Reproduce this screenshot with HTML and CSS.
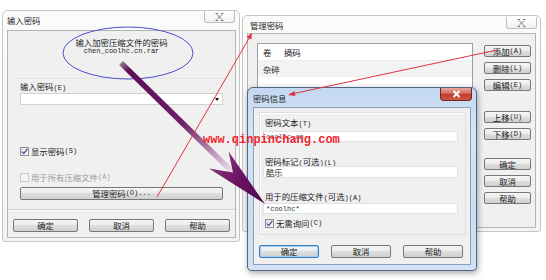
FILE: index.html
```html
<!DOCTYPE html>
<html lang="zh-CN">
<head>
<meta charset="utf-8">
<title>密码</title>
<link rel="stylesheet" href="styles.css">
</head>
<body>
<div class="desk">

  <section class="win basic w1">
    <header class="tbar">
      <span class="ttl">输入密码</span>
      <span class="xbtn"><svg width="9" height="8" viewBox="0 0 9 8"><path d="M2 1.5 L7 6.5 M7 1.5 L2 6.5 M0.5 0.5h2.5 M6 0.5h2.5 M0.5 7.5h2.5 M6 7.5h2.5" stroke="#7a7a7a" stroke-width="1" fill="none"/></svg></span>
    </header>
    <div class="client c1">
      <div class="page">
        <div class="prompt">
          <div>输入加密压缩文件的密码</div>
          <div class="m">chen_coolhc.cn.rar</div>
        </div>
        <div class="grp">
          <div class="lbl">输入密码<span class="m">(E)</span></div>
          <div class="combo"><span class="dd"></span></div>
          <div class="chk show"><span class="cb"><svg width="7" height="7" viewBox="0 0 7 7"><path d="M0.8 3.6 L2.8 5.6 L6.4 0.8" stroke="#34548e" stroke-width="1.3" fill="none"/></svg></span>显示密码<span class="m">(S)</span></div>
          <div class="chk dis"><span class="cb"></span>用于所有压缩文件<span class="m">(A)</span></div>
          <div class="btn mgr">管理密码<span class="m">(O)...</span></div>
        </div>
      </div>
      <div class="btnrow r1">
        <div class="btn">确定</div>
        <div class="btn">取消</div>
        <div class="btn">帮助</div>
      </div>
    </div>
  </section>

  <section class="win basic w2">
    <header class="tbar">
      <span class="ttl">管理密码</span>
      <span class="xbtn"><svg width="9" height="8" viewBox="0 0 9 8"><path d="M2 1.5 L7 6.5 M7 1.5 L2 6.5 M0.5 0.5h2.5 M6 0.5h2.5 M0.5 7.5h2.5 M6 7.5h2.5" stroke="#7a7a7a" stroke-width="1" fill="none"/></svg></span>
    </header>
    <div class="client c2">
      <div class="list">
        <div class="lhead"><span class="col1">卷</span><span>摘码</span></div>
        <div class="lrow"><span class="col1">杂碎</span></div>
      </div>
      <div class="side">
        <div class="bgrp">
          <div class="btn">添加<span class="m">(A)</span></div>
          <div class="btn">删除<span class="m">(L)</span></div>
          <div class="btn">编辑<span class="m">(E)</span></div>
        </div>
        <div class="bgrp g2">
          <div class="btn">上移<span class="m">(U)</span></div>
          <div class="btn">下移<span class="m">(D)</span></div>
        </div>
        <div class="bgrp g3">
          <div class="btn">确定</div>
          <div class="btn">取消</div>
          <div class="btn">帮助</div>
        </div>
      </div>
    </div>
  </section>

  <section class="win aero w3">
    <header class="tbar">
      <span class="ttl">密码信息</span>
      <span class="xred"><svg width="9" height="8" viewBox="0 0 9 8"><path d="M1.5 1 L7.5 7 M7.5 1 L1.5 7" stroke="#ffffff" stroke-width="1.8" fill="none"/></svg></span>
    </header>
    <div class="client c3">
      <div class="grp3">
        <div class="flbl">密码文本<span class="m">(T)</span></div>
        <div class="field f1"><span class="m">coolhc.cn</span></div>
        <div class="flbl l2">密码标记<span class="m">(</span>可选<span class="m">)(L)</span></div>
        <div class="field f2">酷乐</div>
        <div class="flbl l3">用于的压缩文件<span class="m">(</span>可选<span class="m">)(A)</span></div>
        <div class="field f3"><span class="m">*coolhc*</span></div>
        <div class="chk ask"><span class="cb"><svg width="7" height="7" viewBox="0 0 7 7"><path d="M0.8 3.6 L2.8 5.6 L6.4 0.8" stroke="#34548e" stroke-width="1.3" fill="none"/></svg></span>无需询问<span class="m">(C)</span></div>
      </div>
      <div class="btnrow r3">
        <div class="btn def">确定</div>
        <div class="btn">取消</div>
        <div class="btn">帮助</div>
      </div>
    </div>
  </section>

  <svg class="overlay" width="546" height="280" viewBox="0 0 546 280">
    <defs>
      <linearGradient id="shaft" gradientUnits="userSpaceOnUse" x1="121" y1="63" x2="233" y2="172">
        <stop offset="0" stop-color="#9a7c98"/>
        <stop offset="0.07" stop-color="#5a0d55"/>
        <stop offset="0.55" stop-color="#6e1d68"/>
        <stop offset="0.8" stop-color="#b58ab0"/>
        <stop offset="1" stop-color="#f0e2ee"/>
      </linearGradient>
      <linearGradient id="head" gradientUnits="userSpaceOnUse" x1="212" y1="158" x2="265" y2="204">
        <stop offset="0" stop-color="#8a3a82"/>
        <stop offset="0.5" stop-color="#6a1262"/>
        <stop offset="1" stop-color="#4e0848"/>
      </linearGradient>
    </defs>
    <ellipse cx="128" cy="53" rx="65" ry="26" fill="none" stroke="#4c4cd2" stroke-width="1"/>
    <line x1="121" y1="63" x2="233" y2="172.5" stroke="url(#shaft)" stroke-width="5.5"/>
    <polygon points="265,204 209,168.5 233,172.5 228.5,151.5" fill="url(#head)"/>
    <line x1="157" y1="197" x2="249.5" y2="37.5" stroke="#e3323f" stroke-width="1"/>
    <polygon points="252,33 251.4,39.6 246.6,37" fill="#e3323f"/>
    <line x1="497" y1="50" x2="294" y2="93.5" stroke="#e3323f" stroke-width="1"/>
    <polygon points="288,95 294.3,91 295.4,96" fill="#e3323f"/>
  </svg>

  <div class="watermark">www.qinpinchang.com</div>
</div>
</body>
</html>
```

FILE: styles.css
```css
* { box-sizing: border-box; margin: 0; padding: 0; }

html, body {
  width: 546px;
  height: 280px;
  background: #ffffff;
  overflow: hidden;
}

body {
  font-family: "Noto Sans CJK SC", "Noto Sans", sans-serif;
  font-size: 8.4px;
  line-height: 10px;
  color: #1c1c1c;
}

.desk {
  position: relative;
  width: 546px;
  height: 280px;
}

.m {
  font-family: "Liberation Mono", monospace;
  font-size: 7px;
}

/* ---------- windows ---------- */
.win {
  position: absolute;
  display: flex;
  flex-direction: column;
}

.basic {
  background: linear-gradient(#fbfbfb, #f4f4f4);
  border: 1px solid #c6c6c6;
  border-radius: 5px 5px 3px 3px;
}

.tbar {
  display: flex;
  justify-content: space-between;
  align-items: flex-start;
  flex: none;
}

.ttl {
  color: #1e1e1e;
}

.xbtn {
  width: 31px;
  height: 12px;
  border: 1px solid #bdbdbd;
  border-top: none;
  border-radius: 0 0 3px 3px;
  background: linear-gradient(#ffffff, #f1f1f1);
  display: flex;
  align-items: center;
  justify-content: center;
}

.client {
  flex: 1;
  background: #f0f0f0;
  border: 1px solid #b4b4b4;
  display: flex;
}

/* ---------- dialog 1 ---------- */
.w1 {
  left: 2px;
  top: 10px;
  width: 238px;
  height: 232px;
  padding: 0 3px 3px 4px;
}

.w1 .tbar { height: 19px; }
.w1 .ttl { line-height: 19px; }
.w1 .xbtn { margin-right: 1px; }

.c1 {
  flex-direction: column;
}

.page {
  height: 179px;
  border-bottom: 1px solid #d2d2d2;
  box-shadow: 0 1px 0 #ffffff;
  display: flex;
  flex-direction: column;
}

.prompt {
  height: 47px;
  padding-top: 7px;
  text-align: center;
  line-height: 9px;
}

.grp {
  flex: 1;
  margin: 0 5px;
  border-top: 1px solid #e2e2e2;
  padding: 2px 7px 0 7px;
  display: flex;
  flex-direction: column;
}

.lbl {
  height: 10px;
}

.combo {
  margin-top: 2px;
  height: 12px;
  background: #ffffff;
  border: 1px solid #d0d0d0;
  display: flex;
  align-items: center;
  justify-content: flex-end;
  padding-right: 3px;
}

.dd {
  width: 0;
  height: 0;
  border-left: 2.5px solid transparent;
  border-right: 2.5px solid transparent;
  border-top: 3px solid #111111;
}

.chk {
  display: flex;
  align-items: center;
  height: 10px;
}

.cb {
  flex: none;
  width: 9px;
  height: 9px;
  border: 1px solid #8e8f8f;
  background: linear-gradient(135deg, #dedede, #ffffff);
  display: inline-flex;
  align-items: center;
  justify-content: center;
  margin-right: 2px;
}

.chk.show { margin-top: 41px; }
.chk.dis { margin-top: 16px; color: #9b9b9b; }
.chk.dis .cb { border-color: #c9c9c9; background: #f5f5f5; }

.btn {
  height: 13px;
  border: 1px solid #777777;
  border-radius: 2px;
  background: linear-gradient(#f6f6f6 0%, #ececec 45%, #dedede 50%, #d0d0d0 100%);
  display: flex;
  align-items: center;
  justify-content: center;
  line-height: 11px;
  color: #1c1c1c;
}

.btn.mgr { margin-top: 5px; }

.btnrow {
  display: flex;
}

.r1 {
  padding: 9px 0 0 5px;
  gap: 11px;
}

.r1 .btn { width: 65px; }

/* ---------- dialog 2 ---------- */
.w2 {
  left: 242px;
  top: 15px;
  width: 299px;
  height: 217px;
  padding: 0 4px 3px 4px;
}

.w2 .tbar { height: 17px; }
.w2 .ttl { line-height: 19px; padding-left: 3px; }
.w2 .xbtn { margin-right: -1px; margin-top: 1px; }

.c2 {
  padding: 9px 4px 0 9px;
  gap: 11px;
  align-items: flex-start;
}

.list {
  width: 216px;
  height: 176px;
  background: #ffffff;
  border: 1px solid #9aa0a8;
}

.lhead, .lrow {
  display: flex;
  height: 17px;
  align-items: center;
  padding-left: 5px;
}

.lhead {
  border-bottom: 1px solid #ececec;
}

.lrow {
  height: 16px;
  background: #f3f3f3;
}

.col1 { width: 21px; white-space: nowrap; }

.side {
  width: 47px;
  padding-top: 2px;
  display: flex;
  flex-direction: column;
}

.bgrp {
  display: flex;
  flex-direction: column;
  gap: 5px;
}

.side .btn { height: 12px; }
.bgrp.g2 { margin-top: 20px; }
.bgrp.g3 { margin-top: 18px; }

/* ---------- dialog 3 (aero) ---------- */
.aero {
  background: linear-gradient(#c3d8f1 0%, #d6e5f6 25%, #cadcf1 70%, #d3e2f4 100%);
  border: 1px solid #4f6782;
  border-radius: 6px 6px 4px 4px;
  box-shadow: 1px 2px 6px rgba(0, 0, 0, 0.35);
}

.w3 {
  left: 247px;
  top: 87px;
  width: 230px;
  height: 184px;
  padding: 0 5px 5px 5px;
}

.w3 .tbar { height: 19px; }
.w3 .ttl { line-height: 20px; }

.xred {
  width: 32px;
  height: 13px;
  margin-right: -1px;
  border: 1px solid #6e2a24;
  border-top: none;
  border-radius: 0 0 4px 4px;
  background: linear-gradient(#e8a79d 0%, #d06a5c 45%, #c0392a 55%, #cf5a48 100%);
  display: flex;
  align-items: center;
  justify-content: center;
}

.c3 {
  flex-direction: column;
  border-color: #8aa1bc;
  padding: 4px 0 0 5px;
}

.grp3 {
  width: 207px;
  height: 123px;
  border: 1px solid #d8dfe6;
  box-shadow: inset 1px 1px 0 #ffffff;
  padding: 4px 0 0 3px;
  display: flex;
  flex-direction: column;
}

.flbl {
  height: 10px;
  padding-left: 2px;
}

.field {
  width: 195px;
  background: #ffffff;
  border: 1px solid #dde2e8;
  display: flex;
  align-items: center;
  padding-left: 2px;
  color: #333333;
}

.f1 { margin-top: 4px; height: 11px; color: #555555; }
.l2 { margin-top: 14px; }
.f2 { height: 12px; }
.l3 { margin-top: 13px; }
.f3 { margin-top: 2px; height: 11px; }
.chk.ask { margin-top: 4px; padding-left: 2px; }

.r3 {
  padding-top: 10px;
  gap: 12px;
}

.r3 .btn { width: 60px; }

.btn.def {
  border-color: #3b7cc0;
  box-shadow: inset 0 0 0 1px #a6d2f2;
}

/* ---------- overlays ---------- */
.overlay {
  position: absolute;
  left: 0;
  top: 0;
  z-index: 10;
  pointer-events: none;
}

.watermark {
  position: absolute;
  left: 203px;
  top: 134px;
  z-index: 11;
  font-family: "Liberation Mono", monospace;
  font-size: 12px;
  font-weight: bold;
  line-height: 12px;
  color: #f0262e;
  white-space: nowrap;
}
```
